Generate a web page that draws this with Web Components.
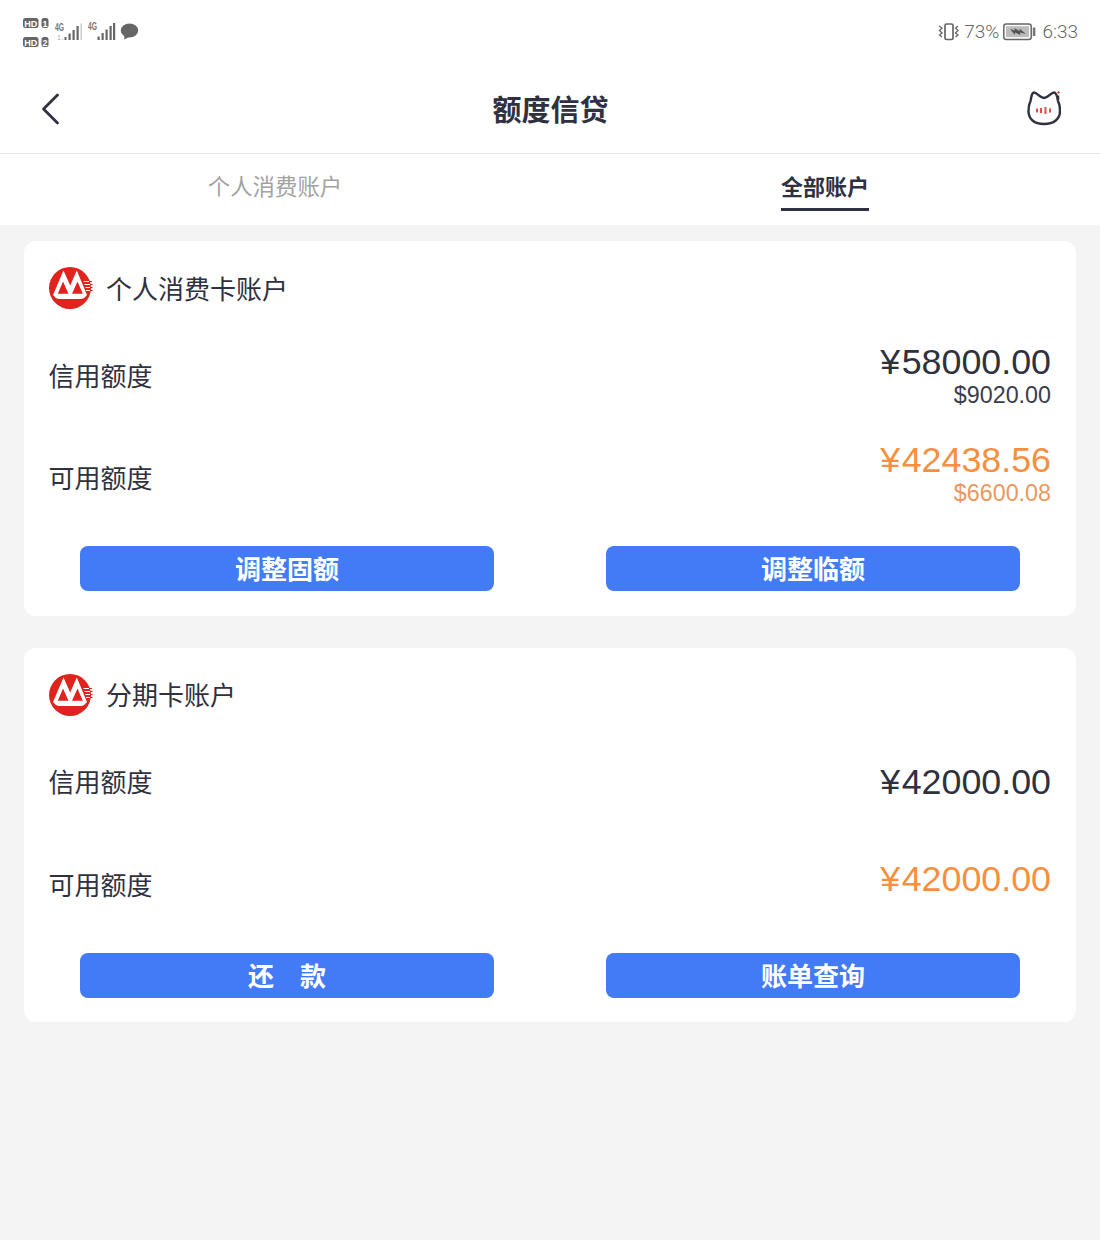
<!DOCTYPE html>
<html lang="zh">
<head>
<meta charset="utf-8">
<title>额度信贷</title>
<style>
	html, body { margin: 0; background: #f4f4f4; }
	body { width: 1100px; min-height: 1240px; font-family: "Liberation Sans", "Noto Sans CJK SC", sans-serif; color: #2f3140; }
</style>
</head>
<body>
<status-bar></status-bar>
<nav-bar>额度信贷</nav-bar>
<tab-bar></tab-bar>
<page-body>
	<account-card title="个人消费卡账户">
		<credit-row label="信用额度" amount="¥58000.00" sub="$9020.00" style="--lift:4px"></credit-row>
		<credit-row label="可用额度" amount="¥42438.56" sub="$6600.08" tone="orange" style="--lift:14px"></credit-row>
		<action-button slot="actions">调整固额</action-button>
		<action-button slot="actions">调整临额</action-button>
	</account-card>
	<account-card title="分期卡账户">
		<credit-row label="信用额度" amount="¥42000.00" style="--lift:1px"></credit-row>
		<credit-row label="可用额度" amount="¥42000.00" tone="orange" style="--lift:12px"></credit-row>
		<action-button slot="actions">还　款</action-button>
		<action-button slot="actions">账单查询</action-button>
	</account-card>
</page-body>

<script>
(function() {
	class StatusBar extends HTMLElement {
		constructor() {
			super();
			this.attachShadow({mode: 'open'}).innerHTML = `<style>
					:host { display: flex; justify-content: space-between; align-items: center; height: 62px; padding: 0 22px; background: white; color: #666; font-family: Roboto, sans-serif; }
					.left, .right { display: flex; align-items: center; }
					.right { gap: 5px; padding-top: 1px; font-size: 19px; font-weight: 300; }
					.batt { margin-left: -1px; }
					.time { margin-left: 1px; }
					svg { display: block; }
					svg text { font-family: "Liberation Sans", sans-serif; font-weight: 700; }
				</style>
				<div class="left">
					<svg width="120" height="32" viewBox="22 15 120 32">
						<rect x="23" y="18" width="15.500" height="10" rx="2.500" fill="#666"/>
						<text x="30.700" y="26.500" font-size="9" fill="white" text-anchor="middle">HD</text>
						<rect x="41.500" y="18" width="7" height="10" rx="2.500" fill="#666"/>
						<text x="45" y="26.500" font-size="9" fill="white" text-anchor="middle">1</text>
						<rect x="23" y="37" width="15.500" height="10" rx="2.500" fill="#666"/>
						<text x="30.700" y="45.500" font-size="9" fill="white" text-anchor="middle">HD</text>
						<rect x="41.500" y="37" width="7" height="10" rx="2.500" fill="#666"/>
						<text x="45" y="45.500" font-size="9" fill="white" text-anchor="middle">2</text>
						<text x="55" y="31" font-size="10" fill="#777" textLength="9" lengthAdjust="spacingAndGlyphs">4G</text>
						<text x="57" y="39.500" font-size="7" fill="#c4c4c4">1↓</text>
						<rect x="64.500" y="37" width="2" height="3" fill="#666"/>
						<rect x="68.500" y="33.500" width="2.200" height="6.500" fill="#666"/>
						<rect x="72.500" y="30" width="2.200" height="10" fill="#666"/>
						<rect x="76.500" y="26" width="2.200" height="14" fill="#666"/>
						<rect x="80.500" y="23.500" width="1.500" height="16.500" fill="#ccc"/>
						<text x="88" y="30" font-size="10" fill="#777" textLength="9" lengthAdjust="spacingAndGlyphs">4G</text>
						<rect x="97.500" y="36.500" width="2.200" height="3.500" fill="#666"/>
						<rect x="101.500" y="33" width="2.200" height="7" fill="#666"/>
						<rect x="105.500" y="29.500" width="2.200" height="10.500" fill="#666"/>
						<rect x="109.500" y="26" width="2.200" height="14" fill="#666"/>
						<rect x="113" y="23" width="2.200" height="17" fill="#666"/>
						<ellipse cx="129.500" cy="30.500" rx="8.700" ry="7" fill="#666"/>
						<path d="M124 35 L124.500 39.500 L130 36.500 Z" fill="#666"/>
					</svg>
				</div>
				<div class="right">
					<svg width="21" height="18" viewBox="0 0 21 18" fill="none" stroke="#666">
						<rect x="7" y="1" width="8" height="15.500" rx="1.500" stroke-width="1.700"/>
						<path d="M1 3 L4 5 L1.500 7.500 L4 10 L1.500 12 L4 14" stroke-width="1.300"/>
						<path d="M20 3 L17.500 5 L20 7.500 L17.500 10 L20 12 L17.500 14" stroke-width="1.300"/>
					</svg>
					<span>73%</span>
					<svg class="batt" width="33" height="18" viewBox="0 0 33 18">
						<rect x="0.800" y="1" width="27.400" height="15.500" rx="2.500" fill="none" stroke="#666" stroke-width="1.500"/>
						<rect x="3" y="3.200" width="23" height="11" fill="#bdbdbd"/>
						<path d="M7 6 L12 7.500 L11 5 L17 8 L16.500 5.500 L23 11 L17 9.500 L17.500 12 L12 9.500 L12 12 Z" fill="#555"/>
						<rect x="29.800" y="4.500" width="2.600" height="8.500" fill="#777"/>
					</svg>
					<span class="time">6:33</span>
				</div>`;
		}
	}

	class NavBar extends HTMLElement {
		constructor() {
			super();
			this.attachShadow({mode: 'open'}).innerHTML = `<style>
					:host { display: grid; grid-template-columns: 1fr auto 1fr; align-items: center; height: 91px; padding: 0 39px 0 40px; background: white; border-bottom: 1px solid #e8e8e8; }
					.title { font-size: 29px; font-weight: 700; color: #2f3140; font-family: "Noto Sans CJK SC", sans-serif; }
					svg { display: block; }
					.cat { justify-self: end; }
				</style>
				<svg width="20" height="34" viewBox="0 0 20 34" fill="none"><path d="M17.500 4 L3.500 18 L17.500 32" stroke="#2f3140" stroke-width="2.800" stroke-linecap="round" stroke-linejoin="round"/></svg>
				<div class="title"><slot></slot></div>
				<svg class="cat" width="34" height="36" viewBox="0 0 34 36" fill="none">
					<path d="M3.500 11 C4.500 6 5 2.500 7 2.500 C10 2.500 13 8 17 8 C21 8 24 2.500 27 2.500 C29 2.500 30.500 8 31 11 C33 15 33 19 33 21 C33 29 27 34 17 34 C7 34 1.500 29 1.500 21 C1.500 17 2 14 3.500 11 Z" stroke="#2f3140" stroke-width="2.400" stroke-linejoin="round"/>
					<circle cx="31.500" cy="2.500" r="1.200" fill="#e0403a"/>
					<path d="M31.500 5.500 L31.500 10" stroke="#2f3140" stroke-width="1.600"/>
					<path d="M10 18.500 V22.500 M14 18 V23 M18.500 17 V24 M23 18.500 V22.500" stroke="#e0504a" stroke-width="2"/>
				</svg>`;
		}
	}

	class TabBar extends HTMLElement {
		constructor() {
			super();
			this.attachShadow({mode: 'open'}).innerHTML = `<style>
					:host { display: grid; grid-template-columns: 1fr 1fr; height: 71px; background: white; font-family: "Noto Sans CJK SC", sans-serif; font-size: 22.400px; }
					.tab { display: flex; justify-content: center; }
					.tab span { display: block; height: 54px; line-height: 62px; color: #a2a2a2; }
					.tab.active span { color: #2f3140; font-size: 22px; font-weight: 700; border-bottom: 3px solid #2f3140; }
				</style>
				<div class="tab"><span>个人消费账户</span></div>
				<div class="tab active"><span>全部账户</span></div>`;
		}
	}

	class PageBody extends HTMLElement {
		constructor() {
			super();
			this.attachShadow({mode: 'open'}).innerHTML = `<style>
					:host { display: flex; flex-direction: column; gap: 32px; padding: 16px 24px 0; }
				</style><slot></slot>`;
		}
	}

	class AccountCard extends HTMLElement {
		constructor() {
			super();
			this.attachShadow({mode: 'open'}).innerHTML = `<style>
					:host { display: block; height: 374.500px; box-sizing: border-box; padding-top: 25px; background: white; border-radius: 12px; }
					.head { display: flex; align-items: center; gap: 13px; height: 44px; padding-left: 25px; font: 26px "Liberation Sans", "Noto Sans CJK SC", sans-serif; color: #2f3140; }
					.title { padding-bottom: 2px; }
					.rows { height: 205px; margin-top: 15px; }
					.actions { display: grid; grid-template-columns: 414px 414px; gap: 112px; padding: 16px 56px 0; }
					svg { display: block; }
				</style>
				<div class="head">
					<svg width="44" height="44" viewBox="0 0 44 44">
						<circle cx="21" cy="22" r="21" fill="#e1231d"/>
						<path d="M14.500 4.500 L21.200 19.500 L27.800 4.500 L38 29 Q35.500 32.500 32.500 33 L9.500 33 Q6.500 32.500 4 29 Z" fill="white"/>
						<path d="M14 15.500 L19.500 27.800 L8.800 27.800 Z M28.500 15.500 L33.800 27.800 L23 27.800 Z" fill="#e1231d"/>
						<path d="M34.500 15.500 H43 M35.500 18.500 H43 M36.500 21.500 H43 M37 24.500 H43" stroke="white" stroke-width="1.100"/>
						<path d="M40 15.500 H43 M41 18.500 H43.500 M41 21.500 H43.500 M41 24.500 H43.500" stroke="#e1231d" stroke-width="1.100"/>
					</svg>
					<span class="title"></span>
				</div>
				<div class="rows"><slot></slot></div>
				<div class="actions"><slot name="actions"></slot></div>`;
		}

		connectedCallback() {
			this.shadowRoot.querySelector('.title').textContent = this.getAttribute('title');
			this.removeAttribute('title');
		}
	}

	class CreditRow extends HTMLElement {
		constructor() {
			super();
			this.attachShadow({mode: 'open'}).innerHTML = `<style>
					:host { display: flex; justify-content: space-between; align-items: center; height: 102.500px; padding: 0 25px 0 24.500px; font-family: "Liberation Sans", "Noto Sans CJK SC", sans-serif; color: #2f3140; }
					.label { font-size: 26px; padding-bottom: 4px; }
					.values { text-align: right; padding-bottom: var(--lift, 0px); }
					.amount { font-size: 35.800px; line-height: 44px; }
					.sign { margin-right: 1.500px; }
					.sub { font-size: 23.300px; line-height: 26px; margin-top: -2px; color: #3b3d4b; }
					:host([tone="orange"]) .amount { color: #f78f3f; }
					:host([tone="orange"]) .sub { color: #e9985f; }
				</style>
				<span class="label"></span>
				<div class="values"><div class="amount"><span class="sign"></span><span class="num"></span></div></div>`;
		}

		connectedCallback() {
			let root = this.shadowRoot;
			let amount = this.getAttribute('amount');
			root.querySelector('.label').textContent = this.getAttribute('label');
			root.querySelector('.sign').textContent = amount.charAt(0);
			root.querySelector('.num').textContent = amount.slice(1);
			if (this.hasAttribute('sub')) {
				let sub = document.createElement('div');
				sub.className = 'sub';
				sub.textContent = this.getAttribute('sub');
				root.querySelector('.values').appendChild(sub);
			}
		}
	}

	class ActionButton extends HTMLElement {
		constructor() {
			super();
			this.attachShadow({mode: 'open'}).innerHTML = `<style>
					:host { display: flex; align-items: center; justify-content: center; height: 45px; box-sizing: border-box; padding-bottom: 2px; background: #437bf6; border-radius: 8px; color: white; font: 700 26px "Noto Sans CJK SC", sans-serif; }
				</style><slot></slot>`;
		}
	}

	function defineElements() {
		customElements.define("status-bar", StatusBar);
		customElements.define("nav-bar", NavBar);
		customElements.define("tab-bar", TabBar);
		customElements.define("page-body", PageBody);
		customElements.define("account-card", AccountCard);
		customElements.define("credit-row", CreditRow);
		customElements.define("action-button", ActionButton);
	}

	defineElements();
})();
</script>
</body>
</html>
